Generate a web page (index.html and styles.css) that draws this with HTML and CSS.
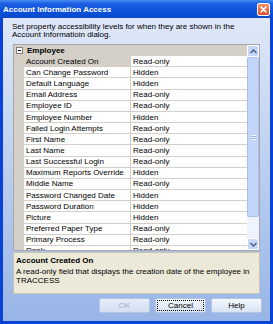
FILE: index.html
```html
<!DOCTYPE html>
<html lang="en">
<head>
    <meta charset="UTF-8">
    <title>Account Information Access</title>
    <link rel="stylesheet" href="styles.css">
</head>
<body>
    <div class="window">
        <div class="titlebar">
            <span class="title">Account Information Access</span>
            <span class="close">
                <svg width="11" height="11" viewBox="0 0 11 11">
                    <path d="M3 3 L8 8 M8 3 L3 8" stroke="#fff" stroke-width="1.6" stroke-linecap="round"/>
                </svg>
            </span>
        </div>
        <div class="client">
            <p class="intro">Set property accessibility levels for when they are shown in the<br>Account Informatioin dialog.</p>

            <div class="grid">
                <div class="rows">
                    <div class="cat"><span class="toggle"></span>Employee</div>
                    <div class="row selected"><span class="name">Account Created On</span><span class="value">Read-only</span></div>
                    <div class="row"><span class="name">Can Change Password</span><span class="value">Hidden</span></div>
                    <div class="row"><span class="name">Default Language</span><span class="value">Hidden</span></div>
                    <div class="row"><span class="name">Email Address</span><span class="value">Read-only</span></div>
                    <div class="row"><span class="name">Employee ID</span><span class="value">Read-only</span></div>
                    <div class="row"><span class="name">Employee Number</span><span class="value">Hidden</span></div>
                    <div class="row"><span class="name">Failed Login Attempts</span><span class="value">Read-only</span></div>
                    <div class="row"><span class="name">First Name</span><span class="value">Read-only</span></div>
                    <div class="row"><span class="name">Last Name</span><span class="value">Read-only</span></div>
                    <div class="row"><span class="name">Last Successful Login</span><span class="value">Read-only</span></div>
                    <div class="row"><span class="name">Maximum Reports Override</span><span class="value">Hidden</span></div>
                    <div class="row"><span class="name">Middle Name</span><span class="value">Read-only</span></div>
                    <div class="row"><span class="name">Password Changed Date</span><span class="value">Hidden</span></div>
                    <div class="row"><span class="name">Password Duration</span><span class="value">Hidden</span></div>
                    <div class="row"><span class="name">Picture</span><span class="value">Hidden</span></div>
                    <div class="row"><span class="name">Preferred Paper Type</span><span class="value">Read-only</span></div>
                    <div class="row"><span class="name">Primary Process</span><span class="value">Read-only</span></div>
                    <div class="row"><span class="name">Rank</span><span class="value">Read-only</span></div>
                </div>
                <div class="scrollbar">
                    <div class="arrow">
                        <svg width="7" height="5" viewBox="0 0 7 5"><path d="M0.5 4 L3.5 1 L6.5 4" fill="none" stroke="#4d6185" stroke-width="1.5"/></svg>
                    </div>
                    <div class="track">
                        <div class="thumb"><span class="grip"></span></div>
                    </div>
                    <div class="arrow">
                        <svg width="7" height="5" viewBox="0 0 7 5"><path d="M0.5 1 L3.5 4 L6.5 1" fill="none" stroke="#4d6185" stroke-width="1.5"/></svg>
                    </div>
                </div>
            </div>

            <div class="help">
                <div class="help-title">Account Created On</div>
                <div class="help-text">A read-only field that displays the creation date of the employee in TRACCESS</div>
            </div>

            <div class="buttons">
                <button type="button" class="btn" disabled>OK</button>
                <button type="button" class="btn focused">Cancel</button>
                <button type="button" class="btn">Help</button>
            </div>
        </div>
    </div>
</body>
</html>
```

FILE: styles.css
```css
body {
    margin: 0;
    font-family: "Liberation Sans", Arial, sans-serif;
    font-size: 8px;
    color: #000;
}
.window {
    width: 273px;
    height: 324px;
    background: #0842d6;
    display: flex;
    flex-direction: column;
}
.titlebar {
    height: 18px;
    display: flex;
    align-items: center;
    justify-content: space-between;
    padding: 0 3px 0 3px;
    background: linear-gradient(#4a8ef5 0%, #1a5fe3 20%, #0a4fd8 70%, #0b49cc 100%);
}
.title {
    color: #fff;
    font-weight: bold;
    font-size: 8px;
}
.close {
    width: 11px;
    height: 11px;
    border: 1px solid #fff;
    border-radius: 2px;
    background: linear-gradient(#f0916c, #d9522c);
    display: flex;
}
.client {
    flex: 1;
    margin: 0 3px 3px 3px;
    background: linear-gradient(#dfe8f8, #98b5e7);
    display: flex;
    flex-direction: column;
    padding: 0 8px 0 10px;
}
.intro {
    margin: 5px 0 0 -1px;
    line-height: 8px;
    height: 21px;
}
.grid {
    display: flex;
    height: 207px;
    box-sizing: border-box;
    border: 1px solid #a7a6aa;
    background: #fff;
    overflow: hidden;
    margin-right: 2px;
}
.rows {
    flex: 1;
    overflow: hidden;
    background: #d4d0c8;
}
.cat {
    height: 11.17px;
    display: flex;
    align-items: center;
    font-weight: bold;
    background: #d4d0c8;
}
.toggle {
    width: 5px;
    height: 5px;
    border: 1px solid #808080;
    background: #fff;
    margin: 0 4px 0 2px;
    position: relative;
}
.toggle::after {
    content: "";
    position: absolute;
    left: 1px;
    top: 2px;
    width: 3px;
    height: 1px;
    background: #000;
}
.row {
    height: 11.17px;
    display: flex;
    margin-left: 10px;
}
.name, .value {
    display: flex;
    align-items: center;
    border-bottom: 1px solid #d4d0c8;
    box-sizing: border-box;
    white-space: nowrap;
    overflow: hidden;
}
.name {
    width: 107px;
    padding-left: 2px;
    background: #fff;
    border-right: 1px solid #d4d0c8;
}
.value {
    flex: 1;
    padding-left: 2px;
    background: #fff;
}
.row.selected .name {
    background: #d4d0c8;
}
.scrollbar {
    width: 12px;
    display: flex;
    flex-direction: column;
    background: #eef3fd;
}
.arrow {
    height: 12px;
    box-sizing: border-box;
    border: 1px solid #fff;
    border-radius: 2px;
    background: #c6d5f8;
    display: flex;
    align-items: center;
    justify-content: center;
}
.track {
    flex: 1;
    background: #eef3fd;
}
.thumb {
    height: 160px;
    box-sizing: border-box;
    border: 1px solid #a9bfef;
    border-radius: 2px;
    background: #c4d5fa;
    display: flex;
    align-items: center;
    justify-content: center;
}
.grip {
    width: 5px;
    height: 5px;
    background: repeating-linear-gradient(#eef3fd 0 1px, #9db4e8 1px 2px);
}
.help {
    height: 42px;
    margin: 1px 2px 0 0;
    padding: 3px 2px 0 2px;
    box-sizing: border-box;
    background: #ece9d8;
    border: 1px solid #c7c5b2;
}
.help-title {
    font-weight: bold;
    line-height: 9px;
    margin-bottom: 2px;
}
.help-text {
    line-height: 9px;
}
.buttons {
    display: flex;
    justify-content: flex-end;
    gap: 5px;
    margin-top: 4px;
}
.btn {
    width: 51px;
    height: 15px;
    padding: 0;
    font-family: "Liberation Sans", Arial, sans-serif;
    font-size: 8px;
    color: #000;
    border: 1px solid #b5c5e3;
    border-radius: 2px;
    background: linear-gradient(#f4f7fc, #d8e3f3);
}
.btn:disabled {
    color: #a6b0c0;
    background: linear-gradient(#e6edf8, #d3dff2);
}
.btn.focused {
    outline: 1px dotted #000;
    outline-offset: -3px;
}
```
